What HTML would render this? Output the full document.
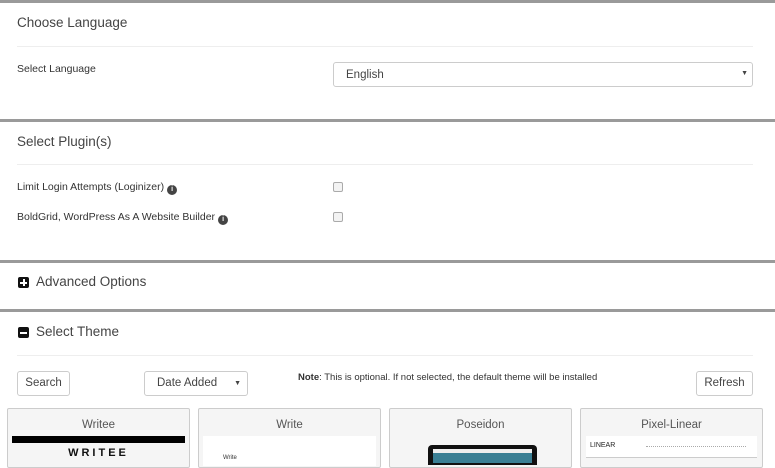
<!DOCTYPE html>
<html><head><meta charset="utf-8"><style>
*{box-sizing:border-box;margin:0;padding:0}
body{width:775px;height:460px;overflow:hidden;background:#fff;font-family:"Liberation Sans",sans-serif;color:#333;position:relative}
.a{position:absolute}
.bar{position:absolute;left:0;width:775px;height:3px;background:#9a9a9a}
.hr{position:absolute;left:17px;width:736px;height:1px;background:#eee}
.h{font-size:13.5px;color:#444}
.t{font-size:10.5px;color:#333}
.btn{position:absolute;border:1px solid #ccc;border-radius:3px;background:#fff;font-size:11.5px;color:#444;text-align:center}
.card{position:absolute;top:408px;width:183px;height:60px;background:#f5f5f5;border:1px solid #ccc;border-radius:2px}
.card .n{font-size:11.5px;color:#555;text-align:center;margin-top:10px}
.cb{position:absolute;width:10px;height:10px;border:1px solid #aaa;border-radius:2px;background:#f3f3f3}
.ic{display:inline-block;width:10px;height:10px;border-radius:50%;background:#444;color:#fff;font-size:7px;font-weight:bold;text-align:center;line-height:10px;vertical-align:-1px;margin-left:3px}
.sq{position:absolute;width:11px;height:11px;background:#111;border-radius:2px;color:#fff}
</style></head><body>
<div class="bar" style="top:0"></div>
<div class="a h" style="left:17px;top:15px">Choose Language</div>
<div class="hr" style="top:46px"></div>
<div class="a t" style="left:17px;top:63px">Select Language</div>
<div class="btn" style="left:333px;top:62px;width:420px;height:25px;text-align:left;padding:6px 12px">English<span style="position:absolute;right:4px;top:7px;font-size:7px">▼</span></div>
<div class="bar" style="top:119px"></div>
<div class="a h" style="left:17px;top:134px">Select Plugin(s)</div>
<div class="hr" style="top:164px"></div>
<div class="a t" style="left:17px;top:181px">Limit Login Attempts (Loginizer)<span class="ic">i</span></div>
<div class="cb" style="left:333px;top:182px"></div>
<div class="a t" style="left:17px;top:211px">BoldGrid, WordPress As A Website Builder<span class="ic">i</span></div>
<div class="cb" style="left:333px;top:212px"></div>
<div class="bar" style="top:260px"></div>
<div class="sq" style="left:18px;top:277px"><div class="a" style="left:2px;top:4.5px;width:7px;height:2px;background:#fff"></div><div class="a" style="left:4.5px;top:2px;width:2px;height:7px;background:#fff"></div></div>
<div class="a h" style="left:36px;top:274px">Advanced Options</div>
<div class="bar" style="top:309px"></div>
<div class="sq" style="left:18px;top:327px"><div class="a" style="left:2px;top:4.5px;width:7px;height:2px;background:#fff"></div></div>
<div class="a h" style="left:36px;top:324px">Select Theme</div>
<div class="hr" style="top:355px"></div>
<div class="btn" style="left:17px;top:371px;width:53px;height:25px;line-height:23px">Search</div>
<div class="btn" style="left:144px;top:371px;width:104px;height:25px;line-height:23px;text-align:left;padding-left:12px">Date Added<span style="position:absolute;right:6px;top:0;font-size:7px">▼</span></div>
<div class="a" style="left:298px;top:372px;font-size:9.5px;color:#333"><b>Note</b>: This is optional. If not selected, the default theme will be installed</div>
<div class="btn" style="left:696px;top:371px;width:57px;height:25px;line-height:23px">Refresh</div>
<div class="card" style="left:7px"><div class="n">Writee</div>
<div class="a" style="left:4px;top:27px;width:173px;height:7px;background:#000"></div>
<div class="a" style="left:0;top:38px;width:181px;text-align:center;font-size:11px;font-weight:bold;letter-spacing:3px;color:#111">WRITEE</div></div>
<div class="card" style="left:198px"><div class="n">Write</div>
<div class="a" style="left:4px;top:27px;width:173px;height:30px;background:#fff"></div>
<div class="a" style="left:24px;top:46px;font-size:6px">Write</div></div>
<div class="card" style="left:389px"><div class="n">Poseidon</div>
<div class="a" style="left:38px;top:36px;width:109px;height:20px;background:#111;border-radius:4px 4px 0 0"></div>
<div class="a" style="left:43px;top:40px;width:99px;height:4px;background:#eee"></div>
<div class="a" style="left:43px;top:44px;width:99px;height:10px;background:#3a7f94"></div></div>
<div class="card" style="left:580px"><div class="n">Pixel-Linear</div>
<div class="a" style="left:5px;top:27px;width:171px;height:22px;background:#fff;border-bottom:1px solid #ccc"></div>
<div class="a" style="left:9px;top:33px;font-size:7px;color:#222">LINEAR</div>
<div class="a" style="left:65px;top:37px;width:100px;height:1px;border-top:1px dotted #aaa"></div></div>
</body></html>
